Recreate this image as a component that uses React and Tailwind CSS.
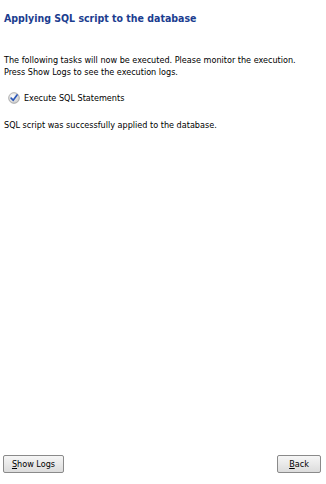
import React from "react";

function CheckIcon() {
  return (
    <svg width="12" height="12" viewBox="0 0 13 13">
      <defs>
        <radialGradient id="ck" cx="40%" cy="35%" r="70%">
          <stop offset="0%" stopColor="#ffffff" />
          <stop offset="100%" stopColor="#c8c8c8" />
        </radialGradient>
      </defs>
      <circle cx="6.5" cy="6.5" r="5.8" fill="url(#ck)" stroke="#9a9a9a" strokeWidth="0.8" />
      <path d="M3.4 6.6 L5.6 9 L9.8 3.2" fill="none" stroke="#2a56b8" strokeWidth="1.8" strokeLinecap="round" strokeLinejoin="round" />
    </svg>
  );
}

function WinButton({ hot, rest, className }) {
  return (
    <button
      className={`h-[18px] rounded-[2px] border border-[#8a8a8a] bg-gradient-to-b from-[#f6f6f6] to-[#dcdcdc] text-[9px] text-black leading-none ${className}`}
    >
      <span className="underline">{hot}</span>
      {rest}
    </button>
  );
}

export default function App() {
  return (
    <div className="w-[326px] h-[484px] bg-white flex flex-col text-[9px] text-black font-['DejaVu_Sans_Condensed','DejaVu_Sans',sans-serif]">
      {/* Header */}
      <div className="pl-[4px] pt-[11px]">
        <h1 className="text-[10.5px] font-bold text-[#1b3d8f] leading-[14px]">
          Applying SQL script to the database
        </h1>
      </div>

      {/* Body */}
      <div className="flex-1 pl-[4px] pt-[29px]">
        <p className="leading-[12px]">
          The following tasks will now be executed. Please monitor the execution.
          <br />
          Press Show Logs to see the execution logs.
        </p>
        <div className="flex items-center gap-[4px] pl-[4px] mt-[14px] leading-[12px]">
          <CheckIcon />
          <span>Execute SQL Statements</span>
        </div>
        <p className="mt-[15px] leading-[12px]">
          SQL script was successfully applied to the database.
        </p>
      </div>

      {/* Buttons */}
      <div className="flex justify-between px-[3px] pb-[11px]">
        <WinButton hot="S" rest="how Logs" className="w-[61px]" />
        <WinButton hot="B" rest="ack" className="w-[44px] mr-[2px]" />
      </div>
    </div>
  );
}
